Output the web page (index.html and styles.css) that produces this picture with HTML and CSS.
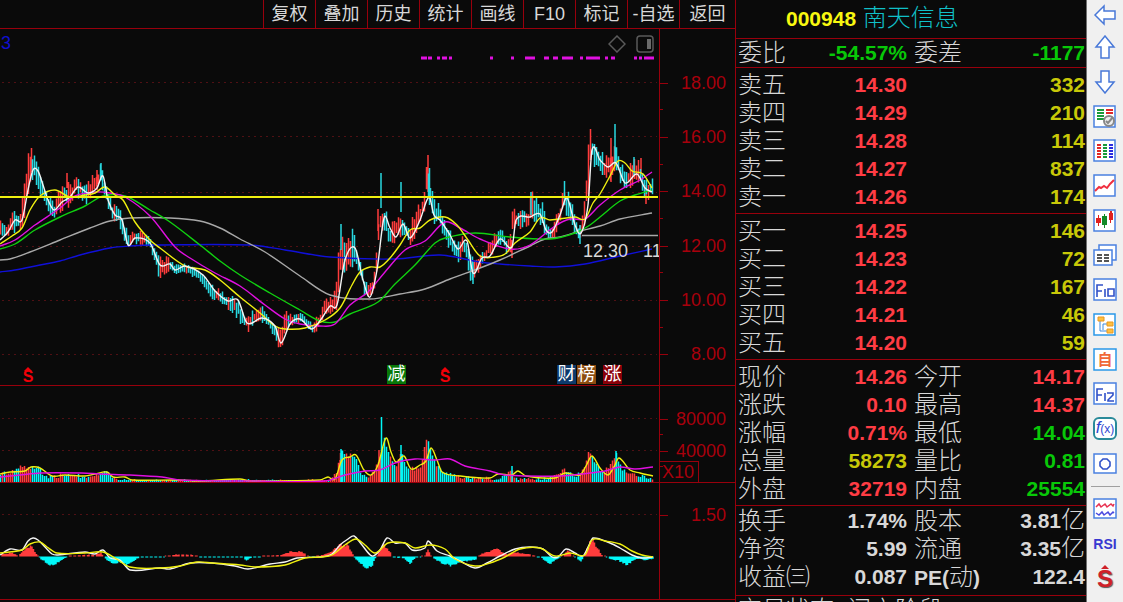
FILE: index.html
```
<!DOCTYPE html>
<html lang="zh-CN">
<head>
    <meta charset="UTF-8">
    <title>000948 南天信息</title>
    <link rel="stylesheet" href="styles.css">
</head>
<body>
    <div class="terminal">
        <main class="charts">
            <nav class="tabs">
                <button>复权</button>
                <button>叠加</button>
                <button>历史</button>
                <button>统计</button>
                <button>画线</button>
                <button>F10</button>
                <button>标记</button>
                <button>-自选</button>
                <button>返回</button>
            </nav>

            <section class="panel">
                <div class="plot">
                    <svg id="price" viewBox="0 29 659 356" preserveAspectRatio="none"></svg>
                    <span class="param">3</span>
                    <span class="low-price">12.30&nbsp;&nbsp; 11.80</span>
                    <div class="plot-tools">
                        <button aria-label="标注">
                            <svg width="18" height="18" viewBox="0 0 18 18"><path d="M9 1l8 8-8 8-8-8z"/></svg>
                        </button>
                        <button aria-label="侧栏">
                            <svg width="18" height="18" viewBox="0 0 18 18"><rect x="1" y="1" width="16" height="16" rx="3"/><path class="solid" d="M11 4h4v10h-4z"/></svg>
                        </button>
                    </div>
                    <span class="star star-1">S</span>
                    <span class="mark mark-cut">减</span>
                    <span class="star star-2">S</span>
                    <span class="mark mark-report">财</span>
                    <span class="mark mark-rank">榜</span>
                    <span class="mark mark-rise">涨</span>
                </div>
                <div class="axis axis-price">
                    <span>18.00</span>
                    <span>16.00</span>
                    <span>14.00</span>
                    <span>12.00</span>
                    <span>10.00</span>
                    <span>8.00</span>
                </div>
            </section>

            <section class="panel">
                <div class="plot">
                    <svg id="volume" viewBox="0 386 659 96" preserveAspectRatio="none"></svg>
                </div>
                <div class="axis axis-volume">
                    <span>80000</span>
                    <span>40000</span>
                    <b class="unit">X10</b>
                </div>
            </section>

            <section class="panel">
                <div class="plot">
                    <svg id="macd" viewBox="0 483 659 116" preserveAspectRatio="none"></svg>
                </div>
                <div class="axis axis-macd">
                    <span>1.50</span>
                </div>
            </section>
        </main>

        <aside class="quote">
            <h1><b>000948</b> 南天信息</h1>
            <table class="single">
                <tr><th>委比</th><td class="down">-54.57%</td><th>委差</th><td class="down">-1177</td></tr>
            </table>
            <table>
                <tr><th>卖五</th><td class="up">14.30</td><th></th><td class="vol">332</td></tr>
                <tr><th>卖四</th><td class="up">14.29</td><th></th><td class="vol">210</td></tr>
                <tr><th>卖三</th><td class="up">14.28</td><th></th><td class="vol">114</td></tr>
                <tr><th>卖二</th><td class="up">14.27</td><th></th><td class="vol">837</td></tr>
                <tr><th>卖一</th><td class="up">14.26</td><th></th><td class="vol">174</td></tr>
            </table>
            <table>
                <tr><th>买一</th><td class="up">14.25</td><th></th><td class="vol">146</td></tr>
                <tr><th>买二</th><td class="up">14.23</td><th></th><td class="vol">72</td></tr>
                <tr><th>买三</th><td class="up">14.22</td><th></th><td class="vol">167</td></tr>
                <tr><th>买四</th><td class="up">14.21</td><th></th><td class="vol">46</td></tr>
                <tr><th>买五</th><td class="up">14.20</td><th></th><td class="vol">59</td></tr>
            </table>
            <table>
                <tr><th>现价</th><td class="up">14.26</td><th>今开</th><td class="up">14.17</td></tr>
                <tr><th>涨跌</th><td class="up">0.10</td><th>最高</th><td class="up">14.37</td></tr>
                <tr><th>涨幅</th><td class="up">0.71%</td><th>最低</th><td class="down">14.04</td></tr>
                <tr><th>总量</th><td class="vol">58273</td><th>量比</th><td class="down">0.81</td></tr>
                <tr><th>外盘</th><td class="up">32719</td><th>内盘</th><td class="down">25554</td></tr>
            </table>
            <table class="basics">
                <tr><th>换手</th><td>1.74%</td><th>股本</th><td>3.81<i>亿</i></td></tr>
                <tr><th>净资</th><td>5.99</td><th>流通</th><td>3.35<i>亿</i></td></tr>
                <tr><th>收益㈢</th><td>0.087</td><th><b>PE(</b>动<b>)</b></th><td>122.4</td></tr>
            </table>
            <p class="status">交易状态: 闭市阶段</p>
        </aside>

        <nav class="toolbar">
            <button class="first" aria-label="后退">
                <svg width="24" height="24" viewBox="0 0 24 24"><path class="arrow" d="M2 12l9-9v5h11v8H11v5z"/></svg>
            </button>
            <button aria-label="上移">
                <svg width="24" height="24" viewBox="0 0 24 24"><path class="arrow" d="M12 1l9 11h-5v11H8V12H3z"/></svg>
            </button>
            <button aria-label="下移">
                <svg width="24" height="24" viewBox="0 0 24 24"><path class="arrow" d="M12 23l9-11h-5V1H8v11H3z"/></svg>
            </button>
            <button aria-label="报价设置">
                <svg width="24" height="24" viewBox="0 0 24 24">
                    <rect class="frame" x="1" y="1" width="21" height="21"/>
                    <path stroke="#1a9a3a" stroke-width="2" d="M4 5h7M4 8h7M4 11h7M4 14h7"/>
                    <path stroke="#e02828" stroke-width="2" d="M13 5h7M13 8h7"/>
                    <circle cx="16" cy="16" r="5" fill="#eee" stroke="#888" stroke-width="2"/>
                    <path fill="none" stroke="#888" stroke-width="2" d="M13 16l2 2 5-6"/>
                </svg>
            </button>
            <button aria-label="报价表">
                <svg width="24" height="24" viewBox="0 0 24 24">
                    <rect class="frame" x="1" y="1" width="21" height="21"/>
                    <path stroke="#e02828" stroke-width="2" d="M4 6h4M4 9h4M4 12h4M4 15h4M4 18h4"/>
                    <path stroke="#1a9a3a" stroke-width="2" d="M10 6h4M10 9h4M10 12h4M10 15h4M10 18h4"/>
                    <path stroke="#2a2ae0" stroke-width="2" d="M16 6h4M16 9h4M16 12h4M16 15h4M16 18h4"/>
                </svg>
            </button>
            <button aria-label="分时图">
                <svg width="24" height="24" viewBox="0 0 24 24">
                    <rect class="frame" x="1" y="1" width="21" height="21"/>
                    <path fill="none" stroke="#f03040" stroke-width="2" d="M2 17l4-4 2 1 3-2 3 2 3-4 4-4"/>
                </svg>
            </button>
            <button aria-label="K线图">
                <svg width="24" height="24" viewBox="0 0 24 24">
                    <rect class="frame" x="1" y="1" width="21" height="21"/>
                    <path fill="#e02020" d="M5 6h1v3h2v5H6v3H5v-3H3V9h2zM17 2h2v2h1v7h-2v3h-1v-3h-1V4h1z"/>
                    <path fill="#128a28" d="M11 5h1v2h2v9h-2v3h-1v-3H9V7h2z"/>
                </svg>
            </button>
            <button aria-label="多窗口">
                <svg width="24" height="24" viewBox="0 0 24 24">
                    <rect class="frame" x="6" y="2" width="17" height="15"/>
                    <rect class="frame" x="1" y="7" width="18" height="15"/>
                    <path stroke="#555" stroke-width="2" d="M4 12h5M11 12h5M4 15h5M11 15h5M4 18h5M11 18h5"/>
                </svg>
            </button>
            <button aria-label="基本资料">
                <svg width="24" height="24" viewBox="0 0 24 24">
                    <rect class="frame" x="1" y="1" width="22" height="21"/>
                    <path class="glyph" d="M4 19V7h6M4 13h5M12 11v8M15 11h6v7h-6z"/>
                </svg>
            </button>
            <button aria-label="板块树">
                <svg width="24" height="24" viewBox="0 0 24 24">
                    <rect class="frame bright" x="1" y="1" width="21" height="21"/>
                    <path fill="none" stroke="#3a8ae0" d="M7 7v11h7M10 11h4M10 11v6"/>
                    <path fill="#ffc040" stroke="#e89820" d="M5 4h6v4H5zM14 9h6v4h-6zM14 16h6v4h-6z"/>
                </svg>
            </button>
            <button aria-label="自选股">
                <svg width="24" height="24" viewBox="0 0 24 24">
                    <rect class="frame bright" x="1" y="1" width="22" height="21"/>
                    <text class="self" x="12" y="17">自</text>
                </svg>
            </button>
            <button aria-label="行情摘要">
                <svg width="24" height="24" viewBox="0 0 24 24">
                    <rect class="frame" x="1" y="1" width="22" height="21"/>
                    <path class="glyph" d="M4 19V7h6M4 13h5M12 11v8M14 11h6v2l-5 5v1h6"/>
                </svg>
            </button>
            <button aria-label="公式">
                <svg width="24" height="24" viewBox="0 0 24 24">
                    <rect x="1" y="1" width="22" height="21" rx="5" fill="#fff" stroke="#2a8a9a" stroke-width="2"/>
                    <text class="fx" x="12" y="16"><tspan class="fn">f</tspan>(x)</text>
                </svg>
            </button>
            <button aria-label="画圆">
                <svg width="24" height="24" viewBox="0 0 24 24">
                    <rect class="frame" x="1" y="2" width="22" height="19"/>
                    <path class="glyph" d="M10 7h4l3 3v4l-3 3h-4l-3-3v-4z"/>
                </svg>
            </button>
            <hr>
            <button aria-label="指标">
                <svg width="24" height="24" viewBox="0 0 24 24">
                    <rect class="frame" x="1" y="2" width="22" height="19"/>
                    <path fill="none" stroke="#e83050" stroke-width="1.5" d="M3 10l3-3 2 3 4-3 2 3 4-3 2 2 1-2"/>
                    <path fill="none" stroke="#4a4ae0" stroke-width="1.5" d="M3 16l3 2 3-3 2 3 4-3 2 3 3-3 1 1"/>
                </svg>
            </button>
            <button class="rsi">RSI</button>
            <button aria-label="标星"><span class="star big">S</span></button>
        </nav>
    </div>
    <script src="chart.js"></script>
</body>
</html>
```
FILE: styles.css
```
* {
    box-sizing: border-box;
}
body {
    margin: 0;
    background-color: #0a0a0a;
    color: #d8d8d8;
    font-family: "Liberation Sans", "Noto Sans CJK SC", sans-serif;
    font-size: 18px;
}
button {
    padding: 0;
    border: none;
    background: none;
    color: inherit;
    font: inherit;
    cursor: pointer;
}
.terminal {
    display: grid;
    grid-template-columns: 1fr 351px 37px;
    height: 100vh;
    overflow: hidden;
}

/* charts */
.charts {
    display: grid;
    grid-template-rows: 29px 357fr 97fr 117fr 2px;
    min-width: 0;
}
.tabs {
    display: grid;
    grid-template-columns: 1fr repeat(8, 52px) 56px;
    border-bottom: 1px solid #98000c;
}
.tabs::before {
    content: "";
}
.tabs button {
    border-left: 1px solid #98000c;
    line-height: 26px;
    white-space: nowrap;
}
.panel {
    display: grid;
    grid-template-columns: 1fr 76px;
    min-height: 0;
    border-bottom: 1px solid #98000c;
}
.plot {
    position: relative;
    min-height: 0;
    overflow: hidden;
}
.plot > svg {
    display: block;
    position: absolute;
    width: 100%;
    height: 100%;
}
.param {
    position: absolute;
    top: 4px;
    left: 1px;
    color: #1010d0;
    line-height: 20px;
}
.low-price {
    position: absolute;
    top: 212px;
    left: 583px;
    line-height: 20px;
    white-space: nowrap;
}
.plot-tools {
    position: absolute;
    top: 6px;
    right: 5px;
    display: flex;
    gap: 10px;
}
.plot-tools button {
    height: 18px;
}
.plot-tools svg {
    display: block;
    fill: none;
    stroke: #5a5a5a;
    stroke-width: 1.5;
}
.plot-tools .solid {
    fill: #6a6a6a;
    stroke: none;
}
.mark {
    position: absolute;
    bottom: 1px;
    width: 19px;
    height: 19px;
    color: #fff;
    line-height: 19px;
    text-align: center;
}
.mark-cut {
    left: 387px;
    background-color: #087808;
}
.mark-report {
    left: 557px;
    background-color: #0c3a6c;
}
.mark-rank {
    left: 577px;
    background-color: #8c4c10;
}
.mark-rise {
    left: 603px;
    background-color: #8a0008;
}
.star {
    position: absolute;
    bottom: 0;
    width: 12px;
    color: #f00008;
    font-size: 16px;
    font-weight: bold;
    line-height: 16px;
    text-align: center;
}
.star::before {
    content: "";
    position: absolute;
    top: -2px;
    left: 2px;
    border: 4px solid transparent;
    border-top: none;
    border-bottom-color: currentColor;
}
.star-1 {
    left: 22px;
}
.star-2 {
    left: 439px;
}
.axis {
    display: flex;
    flex-direction: column;
    border-left: 1px solid #98000c;
    color: #a8000c;
}
.axis span {
    position: relative;
    display: flex;
    flex: 1;
    align-items: center;
    justify-content: flex-end;
    padding-right: 9px;
}
.axis span::before,
.axis span:not(:last-child)::after {
    content: "";
    position: absolute;
    left: 0;
    width: 8px;
    border-top: 1px solid #98000c;
}
.axis span:not(:last-child)::after {
    bottom: 0;
    width: 3px;
}
.axis-price {
    padding: 27px 0 3px;
}
.axis-volume {
    padding-top: 17px;
}
.axis-volume span {
    flex: 0 0 32px;
}
.axis-macd {
    padding: 16px 0 67px;
}
.unit {
    width: 39px;
    height: 21px;
    margin-top: -6px;
    padding-left: 2px;
    border: 1px solid #98000c;
    border-left: none;
    border-bottom: none;
    font-weight: normal;
    line-height: 20px;
}

/* series */
.grid {
    stroke: #501014;
    stroke-dasharray: 2 4;
}
.line {
    fill: none;
    stroke-width: 1.4;
}
.thick {
    stroke-width: 2;
}
.bars {
    fill: none;
    stroke-width: 1.5;
}
.signal {
    stroke-width: 3;
}
.red {
    stroke: #ff3c3c;
}
.cyan {
    stroke: #28d8e0;
}
.bright-cyan {
    stroke: #00f8f8;
}
.white {
    stroke: #f4f4f4;
}
.gray {
    stroke: #a8a8a8;
}
.yellow {
    stroke: #f0f010;
}
.magenta {
    stroke: #e010e0;
}
.green {
    stroke: #10d010;
}
.blue {
    stroke: #1010d8;
}

/* quote */
.quote {
    border-left: 1px solid #98000c;
    overflow: hidden;
    height: 100vh;
    font-size: 24px;
}
.quote h1 {
    height: 38px;
    margin: 0;
    padding-left: 50px;
    color: #10c0c8;
    font-size: 24px;
    font-weight: 300;
    line-height: 36px;
}
.quote b {
    font-size: 21px;
    font-weight: bold;
}
.quote h1 b {
    color: #f8f810;
}
.quote table {
    display: block;
    padding: 3px 0 2px 2px;
    border-top: 1px solid #98000c;
    border-spacing: 0;
}
.quote table.single {
    padding-top: 0;
    padding-bottom: 0;
}
.quote table.basics {
    padding-top: 1px;
    padding-bottom: 4px;
}
.quote tbody {
    display: block;
}
.quote tr {
    display: grid;
    grid-template-columns: 74px 96px 80px 1fr;
    height: 28px;
}
.quote th {
    padding: 0;
    font-weight: 300;
    line-height: 28px;
    text-align: left;
    white-space: nowrap;
}
.quote th + td + th {
    padding-left: 6px;
}
.quote td {
    padding: 0 1px 0 0;
    font-size: 21px;
    font-weight: bold;
    line-height: 28px;
    text-align: right;
    white-space: nowrap;
}
.quote td i {
    font-size: 24px;
    font-style: normal;
    font-weight: 300;
    line-height: 1;
}
.up {
    color: #ff3c44;
}
.down {
    color: #08c808;
}
.vol {
    color: #c8c808;
}
.status {
    margin: 0;
    padding-left: 2px;
    border-top: 1px solid #98000c;
    font-weight: 300;
    line-height: 28px;
}

/* toolbar */
.toolbar {
    display: flex;
    flex-direction: column;
    height: 100vh;
    padding-bottom: 6px;
    border-left: 1px solid #707070;
    background-color: #f0f0f0;
}
.toolbar button {
    display: flex;
    flex: 1;
    align-items: center;
    justify-content: center;
    min-height: 0;
}
.toolbar .first {
    flex: 0 0 30px;
}
.toolbar hr {
    width: 29px;
    height: 1px;
    margin: 5px auto;
    border: none;
    background-color: #a0a0a0;
}
.arrow {
    fill: #fff;
    stroke: #4878d8;
    stroke-width: 1.5;
}
.frame {
    fill: #fff;
    stroke: #4a80e0;
    stroke-width: 1.5;
}
.bright {
    stroke: #2a98e8;
}
.glyph {
    fill: none;
    stroke: #3050c8;
    stroke-width: 1.6;
}
.self {
    fill: #f06838;
    font-size: 15px;
    font-weight: bold;
    text-anchor: middle;
}
.fx {
    fill: #3048d0;
    font-size: 12px;
    text-anchor: middle;
}
.fn {
    font-size: 17px;
    font-style: italic;
}
.toolbar .rsi {
    color: #3838d0;
    font-size: 14px;
    font-weight: bold;
}
.toolbar .big {
    position: relative;
    width: 16px;
    color: #d02028;
    font-size: 24px;
    line-height: 24px;
    text-shadow: 1px 1px 1px #555;
}
.toolbar .big::before {
    left: 4px;
}
```
FILE: chart.js
```
// All series use one shared y space; each svg shows its own slice of it.
const price = document.getElementById("price");
const volume = document.getElementById("volume");
const macd = document.getElementById("macd");

function add(svg, d, cls) {
    const path = document.createElementNS("http://www.w3.org/2000/svg", "path");
    path.setAttribute("d", d);
    path.setAttribute("class", cls);
    svg.appendChild(path);
}

function parse(text) {
    return text.trim().split(/\s+/).map(p => p.split(",").map(Number));
}

// value of column `col` at x, linear between key points
function at(points, x, col) {
    let i = 1;
    while (i < points.length - 1 && points[i][0] < x) i++;
    const a = points[i - 1], b = points[i];
    return a[col] + (b[col] - a[col]) * (x - a[0]) / (b[0] - a[0]);
}

function curve(svg, text, cls) {
    const p = parse(text);
    let d = "M" + p[0];
    for (let i = 0; i < p.length - 1; i++) {
        const a = p[i - 1] || p[i], b = p[i], c = p[i + 1], e = p[i + 2] || c;
        const third = (c[0] - b[0]) / 3;
        const s1 = (c[1] - a[1]) / (c[0] - a[0]), s2 = (e[1] - b[1]) / (e[0] - b[0]);
        d += "C" + [b[0] + third, b[1] + s1 * third, c[0] - third, c[1] - s2 * third, c[0], c[1]];
    }
    add(svg, d, "line " + cls);
}

let seed = 7;
function rnd() {
    seed = (seed * 16807) % 2147483647;
    return seed / 2147483647;
}

function grid(svg, ys) {
    ys.forEach(y => add(svg, "M2 " + y + "H657", "grid"));
}

// price
grid(price, [82.5, 136.5, 192.5, 246.5, 300.5, 354.5]);

const range = parse(`0,222,240 7,227,236 14,200,233 20,218,230 24,180,225 28,155,200 32,148,178 37,158,186
41,178,200 47,190,208 50,195,218 55,205,216 64,175,210 70,187,208 77,175,195 87,185,205 96,170,195
101,163,185 105,177,200 109,190,213 113,205,227 119,202,222 123,218,240 129,238,247 135,230,242
150,238,246 155,250,265 159,257,278 168,256,270 175,265,274 185,264,272 200,272,280 213,285,298
225,295,305 238,297,318 243,312,328 248,312,332 256,312,320 261,306,320 272,320,332 280,330,349
286,312,338 292,317,325 303,313,322 312,325,332 320,312,328 325,297,315 330,298,318 336,280,314
341,224,280 345,245,270 351,225,270 354,232,268 360,255,280 366,282,298 372,280,300 376,250,285
379,210,240 384,205,235 390,225,245 397,215,240 404,220,236 410,228,248 416,205,235 421,205,225
427,165,200 430,178,208 434,200,225 441,205,230 450,230,250 457,243,262 466,235,255 471,258,282
477,255,275 485,250,260 495,230,252 502,232,245 510,240,258 512,210,230 520,212,228 529,212,225
531,192,218 543,203,225 547,225,243 554,222,240 560,205,225 564,182,215 571,200,225 579,225,243
584,210,228 588,150,200 591,129,160 597,145,170 605,158,175 612,145,180 617,145,178 624,172,190
630,165,190 635,158,180 641,162,185 646,178,200 654,180,195`);

let redBars = "", cyanBars = "";
for (let x = 0.5; x < 654; x += 2) {
    const high = at(range, x, 1), low = at(range, x, 2);
    const trend = at(range, x + 3, 1) - at(range, Math.max(x - 3, 0), 1);
    const size = low - high;
    const top = high + rnd() * size * 0.45 - 2, bottom = low - rnd() * size * 0.45 + 2;
    const bar = "M" + x + " " + top.toFixed(1) + "V" + bottom.toFixed(1);
    if (trend + (rnd() - 0.5) * 16 < 0) redBars += bar;
    else cyanBars += bar;
}
// single long wicks
redBars += "M31.5 148V172M67 173V188M97 170V190M378 209V231M428 155V192M512 240V258M590.5 129V160M611 138V182M646 185V204M641 158V176";
cyanBars += "M101 163V180M341 224V250M381 173V208M401 182V212M429.5 168V205M531 192V215M564.5 181V205M615 124V165M634 157V175M473 262V284M580 225V244";
add(price, redBars, "bars red");
add(price, cyanBars, "bars cyan");

curve(price, `0,272 15,270 40,265 60,261 80,255 110,248 130,246 155,245 250,245 285,250 330,257 395,259 440,255
480,262 500,264 530,266 555,267 585,264 620,256 652,249`, "blue");
curve(price, `0,260 10,259 30,252 60,240 90,228 110,221 130,218 170,218 200,221 220,228 240,239 265,252 300,276
330,295 370,299 400,294 425,289 450,279 480,268 500,260 530,246 545,239 560,237 580,231 600,226 620,219 652,213`, "gray");
curve(price, `0,249 15,244 35,230 60,217 85,206 103,196 125,196 150,210 170,222 200,245 220,261 240,275 270,293
300,310 320,321 335,322 350,314 378,302 395,284 415,265 435,243 445,238 475,233 510,237 550,239 575,233 590,225
600,217 620,201 635,195 652,190`, "green");
curve(price, `0,246 15,240 35,225 60,208 75,196 95,192 110,193 125,197 150,216 175,247 190,258 215,273 240,286
265,305 285,319 300,324 320,326 335,324 350,305 368,292 385,272 405,250 425,241 445,222 460,228 480,239 510,249
530,245 555,226 570,219 585,219 600,205 620,190 640,180 652,172`, "magenta");
curve(price, `0,244 12,236 22,228 30,210 40,196 55,190 70,197 85,195 95,193 105,187 115,195 123,200 135,222
150,240 160,248 185,266 205,270 220,280 240,297 260,313 275,326 285,329 305,328 325,320 340,308 352,285 360,272
370,267 380,267 390,258 400,245 410,230 420,228 430,220 445,217 457,225 468,240 480,256 495,257 505,254 515,243
530,232 540,218 550,220 575,217 585,219 593,203 600,194 610,176 618,161 625,163 632,171 643,174 652,188`, "yellow");
curve(price, `0,240 8,232 15,220 22,220 28,190 33,170 38,171 43,185 48,200 54,210 62,202 70,197 78,187 88,193
97,188 103,176 108,200 115,215 122,220 128,245 135,238 150,243 160,265 170,264 175,270 185,266 203,275 215,291
228,301 238,300 247,323 262,318 275,326 281,343 290,324 300,319 312,329 322,318 330,306 337,305 345,260 355,248
363,280 370,297 377,270 384,218 390,228 396,237 403,224 410,238 420,220 429,197 434,215 440,220 450,235 458,249
467,241 473,273 482,258 490,256 500,239 512,247 516,220 530,217 540,214 546,230 552,232 560,215 567,198 575,225
581,233 588,205 592,150 600,160 608,167 616,163 625,183 637,174 645,188 652,192`, "white");
add(price, "M0 197H658", "line thick yellow");
add(price, "M582 235.5H658", "line gray");

// signal dashes along the top
let dashes = "";
[[421, 427], [428, 432], [437, 440], [442, 447], [449, 452], [490, 493], [511, 514], [525, 535], [544, 549],
 [553, 558], [562, 573], [580, 583], [586, 600], [605, 608], [611, 615], [634, 637], [639, 642], [644, 654]]
    .forEach(([a, b]) => dashes += "M" + a + " 58H" + b);
add(price, dashes, "magenta signal");

// volume
grid(volume, [418.5, 450.5]);
const vols = parse(`0,473 10,471 22,465 31,467 38,466 45,475 55,476 65,473 85,476 100,472 107,472 115,478 130,480
330,480 337,470 341,449 347,455 355,454 360,470 368,478 374,470 380,458 384,436 390,455 396,465 401,452 408,467
420,468 427,437 430,445 436,465 445,472 460,476 500,478 512,470 516,478 545,478 565,468 575,476 583,470 589,450
594,460 603,472 613,460 616,452 622,468 635,474 654,477`);
redBars = "M379 450V482M340 460V482";
cyanBars = "M381.5 417V482M341 449V482M401 445V482M512 466V482M616 451V482";
for (let x = 0.5; x < 654; x += 2) {
    const top = at(vols, x, 1) + rnd() * 4 - 1;
    const bar = "M" + x + " " + Math.min(top, 480).toFixed(1) + "V482";
    if (at(range, x + 3, 1) - at(range, Math.max(x - 3, 0), 1) + (rnd() - 0.5) * 20 < 0) redBars += bar;
    else cyanBars += bar;
}
add(volume, redBars, "bars red");
add(volume, cyanBars, "bars bright-cyan");
curve(volume, `0,474 10,472 25,471 31,467 40,468 52,476 65,475 85,476 95,474 107,472 113,477 125,477 132,480 178,480
200,481 240,479 250,481 320,480 328,477 335,479 342,460 350,457 356,455 364,470 371,475 378,465 386,438 391,452
396,462 404,456 411,469 420,465 426,461 431,448 437,460 442,472 460,476 490,478 498,474 512,475 518,471 526,476
555,478 565,473 580,475 586,466 592,456 600,468 608,475 614,467 619,458 630,470 640,473 653,476`, "yellow");
curve(volume, `0,477 20,475 40,473 82,473 100,474 130,475 162,477 180,480 250,481 325,481 345,475 365,471 380,470
395,463 415,459 435,460 450,459 465,466 490,471 505,475 560,476 590,473 605,471 620,467 635,469 653,467`, "magenta");

// MACD
grid(macd, [514.5]);
const hist = parse(`0,-2 12,-4 18,-1 25,-7 31,-11 36,-3 40,2 46,6 52,10 58,6 66,1 70,-1 95,-2 101,-4 105,2 112,7
120,6 127,10 132,5 140,1 160,1 175,-2 192,-2 200,1 242,1 247,4 252,1 270,-1 283,-2 290,-5 302,-5 310,1 320,-1
330,-4 340,-13 348,-11 356,3 365,11 371,12 376,1 383,-13 390,-5 394,1 404,2 410,8 416,1 425,-1 428,-7 432,1 440,6
450,10 460,6 470,4 476,3 480,-2 497,-8 508,-2 512,-5 520,-4 535,-1 542,2 549,8 560,1 568,-6 573,-1 581,6 586,-5
592,-19 597,-10 602,-2 610,3 618,4 627,9 637,2 645,4 654,2`);
redBars = "";
cyanBars = "";
for (let x = 0.5, i = 0; x < 654; x += 1.5, i++) {
    const h = at(hist, x, 1) * (0.8 + rnd() * 0.3);
    if (Math.abs(h) < 2 && i % 3 === 0) continue;
    const end = h < 0 ? Math.min(h, -1) : Math.max(h, 1);
    const bar = "M" + x + " 556.5V" + (556.5 + end).toFixed(1);
    if (h < 0) redBars += bar;
    else cyanBars += bar;
}
add(macd, redBars, "bars red");
add(macd, cyanBars, "bars bright-cyan");
curve(macd, `0,555 10,549 22,550 28,541 33,538 38,540 45,547 52,554 58,555 85,552 95,554 103,550 110,558 120,560
130,570 160,568 170,569 190,563 212,563 235,566 248,569 270,564 285,562 297,558 320,557 332,554 340,545 348,539
354,536 362,545 372,556 380,550 387,538 395,543 405,543 412,550 425,548 428,541 437,551 450,556 460,561 475,568
487,563 500,556 515,549 530,547 543,549 552,557 558,557 566,549 575,553 583,556 589,545 593,538 610,543 620,548
632,555 642,558 653,557`, "white");
curve(macd, `0,553 22,550 30,544 40,542 47,547 57,553 85,553 103,552 115,558 130,567 160,568 180,566 197,562 212,563
240,565 255,567 285,565 305,558 322,557 332,555 345,545 356,539 365,545 375,553 388,543 405,543 415,548 430,545
445,549 455,559 475,566 490,563 505,557 520,549 540,548 555,556 570,553 585,555 592,540 605,541 620,544 632,551
642,555 653,557`, "yellow");
```
